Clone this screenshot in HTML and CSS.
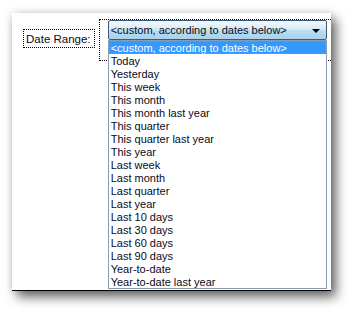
FILE: index.html
```html
<!DOCTYPE html>
<html>
<head>
<meta charset="utf-8">
<link rel="stylesheet" href="styles.css">
</head>
<body>
<div class="window">
  <div class="label">Date Range:</div>
  <div class="field">
    <div class="combo">
      <span class="combo-text">&lt;custom, according to dates below&gt;</span>
      <span class="arrow"></span>
    </div>
    <ul class="list">
      <li class="sel">&lt;custom, according to dates below&gt;</li>
      <li>Today</li>
      <li>Yesterday</li>
      <li>This week</li>
      <li>This month</li>
      <li>This month last year</li>
      <li>This quarter</li>
      <li>This quarter last year</li>
      <li>This year</li>
      <li>Last week</li>
      <li>Last month</li>
      <li>Last quarter</li>
      <li>Last year</li>
      <li>Last 10 days</li>
      <li>Last 30 days</li>
      <li>Last 60 days</li>
      <li>Last 90 days</li>
      <li>Year-to-date</li>
      <li>Year-to-date last year</li>
    </ul>
  </div>
</div>
</body>
</html>
```
FILE: styles.css
```css
html, body {
  margin: 0;
  padding: 0;
  background: #fff;
}
body {
  width: 351px;
  height: 311px;
  overflow: hidden;
  font-family: "Liberation Sans", Arial, sans-serif;
  font-size: 11px;
  color: #0c0a1a;
}
.window {
  margin: 13px 0 0 12px;
  width: 319px;
  height: 278px;
  background: #fff;
  border-bottom: 1px solid #000;
  box-shadow: 5px 6px 11px rgba(0,0,0,0.6), 0 0 8px rgba(0,0,0,0.12);
  display: flex;
  align-items: flex-start;
  padding: 6px 0 0 11px;
  box-sizing: border-box;
}
.label {
  margin-top: 10px;
  width: 74px;
  height: 19px;
  box-sizing: border-box;
  border: 1px dotted #000;
  padding: 3px 0 0 2px;
  line-height: 13px;
  font-size: 11.5px;
}
.field {
  position: relative;
  margin-left: 4px;
  width: 240px;
  height: 42px;
  box-sizing: border-box;
  border: 1px dotted #000;
  border-right: none;
  padding-left: 8px;
}
.combo {
  width: 219px;
  height: 20px;
  box-sizing: border-box;
  border: 1px solid #3d5a78;
  border-radius: 2px;
  background: linear-gradient(#f2f9fd 0%, #d6ecf8 45%, #b6dcf1 55%, #a8d3ec 100%);
  display: flex;
  align-items: center;
  padding: 1px 6px 0 2px;
}
.combo-text {
  flex: 1;
  line-height: 13px;
  white-space: nowrap;
}
.arrow {
  width: 0;
  height: 0;
  border-left: 4px solid transparent;
  border-right: 4px solid transparent;
  border-top: 4px solid #000;
}
.list {
  position: absolute;
  left: 8px;
  top: 20px;
  width: 219px;
  margin: 0;
  padding: 0;
  list-style: none;
  background: #fff;
  border: 1px solid #8a9bb0;
  box-sizing: border-box;
}
.list li {
  height: 13px;
  line-height: 14px;
  padding-left: 2px;
  white-space: nowrap;
}
.list li.sel {
  background: #3399ff;
  color: #fff;
  outline: 1px dotted #e08020;
  outline-offset: -1px;
}
```
